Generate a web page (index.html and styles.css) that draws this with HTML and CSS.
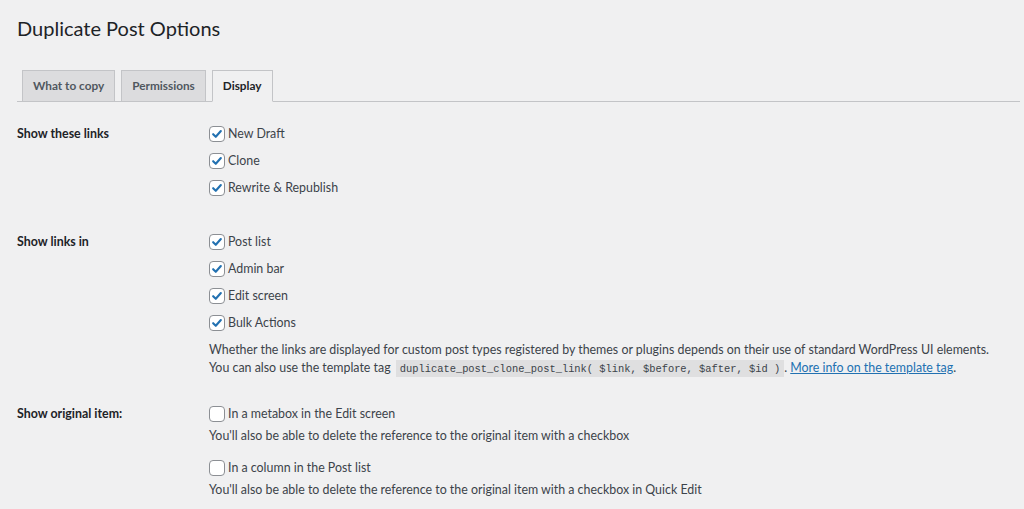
FILE: index.html
```html
<!DOCTYPE html>
<html lang="en">
<head>
    <meta charset="UTF-8">
    <meta name="viewport" content="width=device-width, initial-scale=1.0">
    <title>Duplicate Post Options</title>
    <link rel="stylesheet" href="styles.css">
</head>
<body>

<div class="wrap">
    <h1>Duplicate Post Options</h1>

    <nav class="tab-wrapper">
        <a href="#" class="tab">What to copy</a>
        <a href="#" class="tab">Permissions</a>
        <a href="#" class="tab tab-active">Display</a>
    </nav>

    <section class="options">
        <div class="option-row">
            <div class="option-label">Show these links</div>
            <div class="option-field">
                <label class="check-item"><span class="box checked"><svg viewBox="0 0 16 16"><path d="M3.6 8.2 L6.6 11.2 L12.4 4.6"/></svg></span>New Draft</label>
                <label class="check-item"><span class="box checked"><svg viewBox="0 0 16 16"><path d="M3.6 8.2 L6.6 11.2 L12.4 4.6"/></svg></span>Clone</label>
                <label class="check-item"><span class="box checked"><svg viewBox="0 0 16 16"><path d="M3.6 8.2 L6.6 11.2 L12.4 4.6"/></svg></span>Rewrite &amp; Republish</label>
            </div>
        </div>

        <div class="option-row">
            <div class="option-label">Show links in</div>
            <div class="option-field">
                <label class="check-item"><span class="box checked"><svg viewBox="0 0 16 16"><path d="M3.6 8.2 L6.6 11.2 L12.4 4.6"/></svg></span>Post list</label>
                <label class="check-item"><span class="box checked"><svg viewBox="0 0 16 16"><path d="M3.6 8.2 L6.6 11.2 L12.4 4.6"/></svg></span>Admin bar</label>
                <label class="check-item"><span class="box checked"><svg viewBox="0 0 16 16"><path d="M3.6 8.2 L6.6 11.2 L12.4 4.6"/></svg></span>Edit screen</label>
                <label class="check-item"><span class="box checked"><svg viewBox="0 0 16 16"><path d="M3.6 8.2 L6.6 11.2 L12.4 4.6"/></svg></span>Bulk Actions</label>
                <p class="description">
                    Whether the links are displayed for custom post types registered by themes or plugins depends on their use of standard WordPress UI elements.<br>
                    You can also use the template tag <code>duplicate_post_clone_post_link( $link, $before, $after, $id )</code>. <a href="#">More info on the template tag</a>.
                </p>
            </div>
        </div>

        <div class="option-row">
            <div class="option-label">Show original item:</div>
            <div class="option-field">
                <label class="check-item"><span class="box"></span>In a metabox in the Edit screen</label>
                <p class="help">You'll also be able to delete the reference to the original item with a checkbox</p>
                <label class="check-item spaced"><span class="box"></span>In a column in the Post list</label>
                <p class="help">You'll also be able to delete the reference to the original item with a checkbox in Quick Edit</p>
            </div>
        </div>
    </section>
</div>

</body>
</html>
```

FILE: styles.css
```css
body {
    margin: 0;
    padding: 0;
    background-color: #f0f0f1;
    color: #3c434a;
    font-family: 'Lato', 'Liberation Sans', sans-serif;
    font-size: 12.4px;
}

.wrap {
    padding: 0 4px 0 17px;
}

h1 {
    margin: 0;
    padding: 14px 0 0;
    height: 56px;
    box-sizing: border-box;
    font-size: 20px;
    font-weight: 400;
    line-height: 28px;
    color: #1d2327;
}

.tab-wrapper {
    display: flex;
    align-items: flex-end;
    border-bottom: 1px solid #c3c4c7;
    padding-left: 5px;
    margin-top: 14px;
}

.tab {
    display: block;
    margin-right: 6px;
    margin-bottom: -1px;
    padding: 0 10px;
    height: 30px;
    line-height: 30px;
    background-color: #dcdcde;
    border: 1px solid #c3c4c7;
    color: #50575e;
    font-size: 11.8px;
    font-weight: 700;
    text-decoration: none;
}

.tab-active {
    background-color: #f0f0f1;
    border-bottom-color: #f0f0f1;
    color: #1d2327;
}

.options {
    padding-top: 18px;
}

.option-row {
    display: grid;
    grid-template-columns: 192px 1fr;
    margin-bottom: 27px;
}

.option-row:nth-child(2) {
    margin-bottom: 22px;
}

.option-row:last-child {
    margin-bottom: 0;
}

.option-label {
    line-height: 27px;
    font-weight: 700;
    color: #1d2327;
}

.check-item {
    display: flex;
    align-items: center;
    height: 27px;
    color: #3c434a;
}

.check-item.spaced {
    margin-top: 9px;
}

.box {
    width: 14px;
    height: 14px;
    margin-right: 3px;
    border: 1px solid #8c8f94;
    border-radius: 4px;
    background-color: #fff;
    flex-shrink: 0;
}

.box svg {
    display: block;
    width: 14px;
    height: 14px;
    fill: none;
    stroke: #2271b1;
    stroke-width: 2.4;
    stroke-linecap: round;
    stroke-linejoin: round;
}

.description {
    margin: 5px 0 0;
    line-height: 18px;
    white-space: nowrap;
}

.description code {
    font-family: 'Liberation Mono', monospace;
    font-size: 10.4px;
    background-color: rgba(0, 0, 0, 0.07);
    padding: 3px 4px 2px;
    margin-left: 2px;
}

.description a {
    color: #2271b1;
}

.help {
    margin: 0;
    line-height: 18px;
}
```
